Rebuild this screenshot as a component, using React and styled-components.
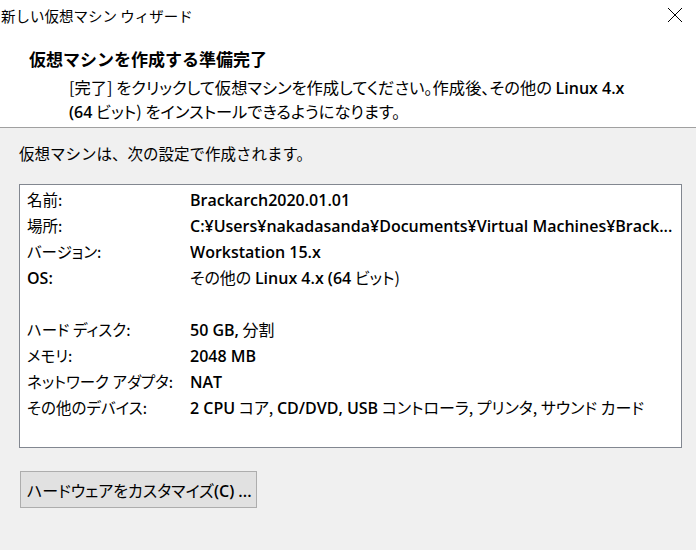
import React from "react";
import styled, { createGlobalStyle } from "styled-components";

const Global = createGlobalStyle`
  html, body { margin: 0; padding: 0; }
  body {
    background: #f0f0f0;
    font-family: "Noto Sans CJK JP", "Open Sans", sans-serif;
    color: #000;
    width: 696px;
    height: 550px;
    overflow: hidden;
  }
`;

const Window = styled.div`
  width: 696px;
  height: 550px;
  display: flex;
  flex-direction: column;
`;

const Header = styled.header`
  background: #fff;
  border-bottom: 1px solid #a0a0a0;
  height: 128px;
  box-sizing: border-box;
  display: flex;
  flex-direction: column;
`;

const TitleBar = styled.div`
  height: 32px;
  display: flex;
  align-items: center;
  justify-content: space-between;
  padding: 0 13px 0 1px;
`;

const Title = styled.div`
  font-size: 14.5px;
  line-height: 32px;
`;

const CloseIcon = styled.svg`
  width: 16px;
  height: 16px;
  display: block;
  margin-top: -2px;
`;

const Heading = styled.h1`
  margin: 16px 0 0 29px;
  font-size: 17px;
  line-height: 22px;
  font-weight: 700;
`;

const Desc = styled.p`
  margin: 6px 0 0 69px;
  font-size: 16.3px;
  line-height: 23px;
  font-feature-settings: "palt" 1;
`;

const L = styled.span`
  font-family: "Open Sans", sans-serif;
  font-weight: 600;
  font-size: 16px;
`;

const Body = styled.main`
  padding: 15px 14px 0 19px;
  display: flex;
  flex-direction: column;
  align-items: flex-start;
`;

const Intro = styled.div`
  font-size: 15.5px;
  line-height: 20px;
`;

const SummaryBox = styled.div`
  margin-top: 21px;
  align-self: stretch;
  height: 264px;
  box-sizing: border-box;
  background: #fff;
  border: 1px solid #828790;
  padding: 1px 7px;
  display: grid;
  grid-template-columns: 163px 1fr;
  grid-auto-rows: 26px;
  align-items: center;
  font-size: 16px;
  font-feature-settings: "palt" 1;
`;

const Label = styled.div`
  white-space: nowrap;
  font-size: 15.5px;
`;

const Value = styled.div`
  white-space: nowrap;
  overflow: hidden;
`;

const Spacer = styled.div`
  grid-column: 1 / -1;
`;

const CustomizeButton = styled.button`
  margin: 23px 0 0 1px;
  width: 237px;
  height: 37px;
  box-sizing: border-box;
  background: #e1e1e1;
  border: 1px solid #adadad;
  font-family: "Noto Sans CJK JP", sans-serif;
  font-feature-settings: "palt" 1;
  font-size: 16px;
  color: #000;
  text-align: left;
  white-space: nowrap;
  padding: 0 0 0 6px;
`;

const rows = [
  ["名前:", <L key="a">Brackarch2020.01.01</L>],
  [
    "場所:",
    <L key="b">C:¥Users¥nakadasanda¥Documents¥Virtual Machines¥Brack...</L>,
  ],
  ["バージョン:", <L key="c">Workstation 15.x</L>],
  [
    <L key="l">OS:</L>,
    <>
      その他の <L>Linux 4.x (64</L> ビット)
    </>,
  ],
  null,
  [
    "ハード ディスク:",
    <>
      <L>50 GB,</L> 分割
    </>,
  ],
  ["メモリ:", <L key="m">2048 MB</L>],
  ["ネットワーク アダプタ:", <L key="n">NAT</L>],
  [
    "その他のデバイス:",
    <>
      <L>2 CPU</L> コア, <L>CD/DVD, USB</L> コントローラ, プリンタ, サウンド カード
    </>,
  ],
];

export default function App() {
  return (
    <Window>
      <Global />
      <Header>
        <TitleBar>
          <Title>新しい仮想マシン ウィザード</Title>
          <CloseIcon viewBox="0 0 16 16">
            <path d="M1 1 L15 15 M15 1 L1 15" stroke="#000" strokeWidth="1" fill="none" />
          </CloseIcon>
        </TitleBar>
        <Heading>仮想マシンを作成する準備完了</Heading>
        <Desc>
          [完了] をクリックして仮想マシンを作成してください。作成後、その他の <L>Linux 4.x</L>
          <br />
          <L>(64</L> ビット) をインストールできるようになります。
        </Desc>
      </Header>
      <Body>
        <Intro>仮想マシンは、次の設定で作成されます。</Intro>
        <SummaryBox>
          {rows.map((r, i) =>
            r ? (
              <React.Fragment key={i}>
                <Label>{r[0]}</Label>
                <Value>{r[1]}</Value>
              </React.Fragment>
            ) : (
              <Spacer key={i} />
            )
          )}
        </SummaryBox>
        <CustomizeButton>
          ハードウェアをカスタマイズ<L>(C) ...</L>
        </CustomizeButton>
      </Body>
    </Window>
  );
}
